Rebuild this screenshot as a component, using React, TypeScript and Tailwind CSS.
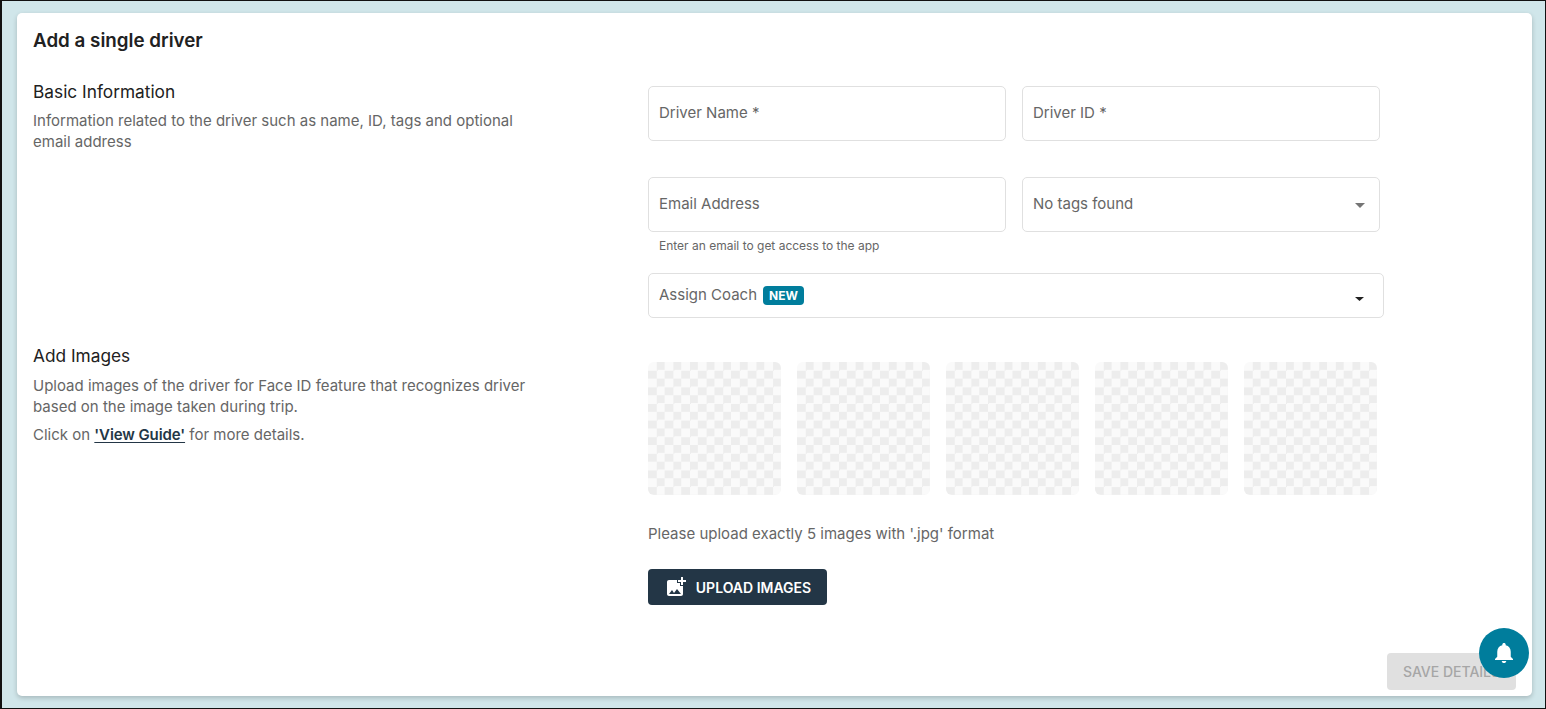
const slots = [1, 2, 3, 4, 5];

const TextField = ({ label }: { label: string }) => (
  <div className="w-[358px] h-[55px] border border-[#e0e0e0] rounded-[5px] px-[10px] flex items-center text-[15px] text-[#666]">
    {label}
  </div>
);

const App = () => {
  return (
    <div className="relative h-[709px] w-[1546px] overflow-hidden bg-[#d0e6ea] border-t border-l-2 border-r border-b border-[#111] font-['Inter',sans-serif]">
      <div className="ml-[15px] mt-[12px] w-[1515px] h-[683px] bg-white rounded-[5px] shadow-[0_2px_5px_rgba(0,0,0,0.2)] flex flex-col px-4 pt-[16px]">
        <h1 className="text-[18.8px] leading-[24px] font-semibold text-[#212121]">Add a single driver</h1>

        <div className="flex mt-[33px]">
          <div className="w-[615px] shrink-0">
            <h2 className="text-[17.3px] leading-[24px] font-normal text-[#212121] mt-[-6px]">Basic Information</h2>
            <p className="mt-[6px] w-[500px] text-[15px] leading-[21px] text-[#666]">
              Information related to the driver such as name, ID, tags and optional email address
            </p>
          </div>
          <div className="flex flex-col">
            <div className="flex gap-4">
              <TextField label="Driver Name *" />
              <TextField label="Driver ID *" />
            </div>
            <div className="flex gap-4 mt-9">
              <TextField label="Email Address" />
              <div className="w-[358px] h-[55px] border border-[#e0e0e0] rounded-[5px] pl-[10px] pr-[14px] flex items-center justify-between text-[15px] text-[#666]">
                No tags found
                <svg width="10" height="5" viewBox="0 0 10 5" className="shrink-0 mt-[2px]">
                  <path d="M0 0h10L5 5z" fill="#757575" />
                </svg>
              </div>
            </div>
            <p className="mt-[6px] ml-[11px] text-[12px] leading-[15px] text-[#666]">Enter an email to get access to the app</p>
            <div className="mt-[20px] w-[736px] h-[45px] border border-[#e0e0e0] rounded-[5px] pl-[10px] pr-[19px] flex items-center justify-between text-[15px] text-[#666]">
              <span className="flex items-center gap-[6px]">
                Assign Coach
                <span className="h-[19px] px-[6px] rounded-[4px] bg-[#007d9c] text-white text-[12px] font-bold flex items-center">NEW</span>
              </span>
              <svg width="9" height="4" viewBox="0 0 9 4" className="shrink-0 mt-[7px]">
                <path d="M0 0h9L4.500 4z" fill="#212121" />
              </svg>
            </div>
          </div>
        </div>

        <div className="flex mt-[26px]">
          <div className="w-[615px] shrink-0">
            <h2 className="text-[17.3px] leading-[24px] font-normal text-[#212121]">Add Images</h2>
            <p className="mt-[7px] w-[500px] text-[15px] leading-[21px] text-[#666]">
              Upload images of the driver for Face ID feature that recognizes driver based on the image taken during trip.
            </p>
            <p className="mt-[7px] text-[15px] leading-[21px] text-[#666]">
              Click on <span className="font-semibold text-[#233646] underline underline-offset-2 tracking-[-0.1px]">'View Guide'</span> for more details.
            </p>
          </div>
          <div className="flex flex-col pt-[18px]">
            <div className="flex gap-4">
              {slots.map((slot) => (
                <div
                  key={slot}
                  className="w-[133px] h-[133px] rounded-[6px] bg-[#fafafa] bg-[conic-gradient(#ededed_25%,#fafafa_0_50%,#ededed_0_75%,#fafafa_0)] bg-[length:16.62px_16.62px]"
                />
              ))}
            </div>
            <p className="mt-[28px] text-[15px] leading-[21px] text-[#666]">Please upload exactly 5 images with '.jpg' format</p>
            <button className="mt-[25px] w-[179px] h-[36px] rounded-[4px] bg-[#233646] text-white text-[14px] font-semibold flex items-center justify-center gap-[8px]">
              <svg width="24" height="24" viewBox="0 0 24 24" fill="white" className="shrink-0">
                <path d="M19 7v2.990s-1.990.010-2 0V7h-3s.010-1.990 0-2h3V2h2v3h3v2h-3zm-3 4V8h-3V5H5c-1.100 0-2 .900-2 2v12c0 1.100.900 2 2 2h12c1.100 0 2-.900 2-2v-8h-3zM5 19l3-4 2 3 3-4 4 5H5z" />
              </svg>
              UPLOAD IMAGES
            </button>
          </div>
        </div>

        <div className="flex justify-end mt-auto mb-[6px]">
          <button className="w-[129px] h-[37px] rounded-[4px] bg-[#e0e0e0] text-[#a6a6a6] text-[14px] font-medium whitespace-nowrap overflow-hidden">
            SAVE DETAILS
          </button>
        </div>
      </div>

      <div className="absolute left-[1477px] top-[627px] w-[50px] h-[50px] rounded-full bg-[#007d9c] flex items-center justify-center">
        <svg width="18" height="20" viewBox="4 2.500 16 19.500" fill="white" preserveAspectRatio="none" className="mb-[1px]">
          <path d="M12 22c1.100 0 2-.900 2-2h-4c0 1.100.890 2 2 2zm6-6v-5c0-3.070-1.640-5.640-4.500-6.320V4c0-.830-.670-1.500-1.500-1.500s-1.500.670-1.500 1.500v.680C7.630 5.360 6 7.920 6 11v5l-2 2v1h16v-1l-2-2z" />
        </svg>
      </div>
    </div>
  );
};

export default App;
